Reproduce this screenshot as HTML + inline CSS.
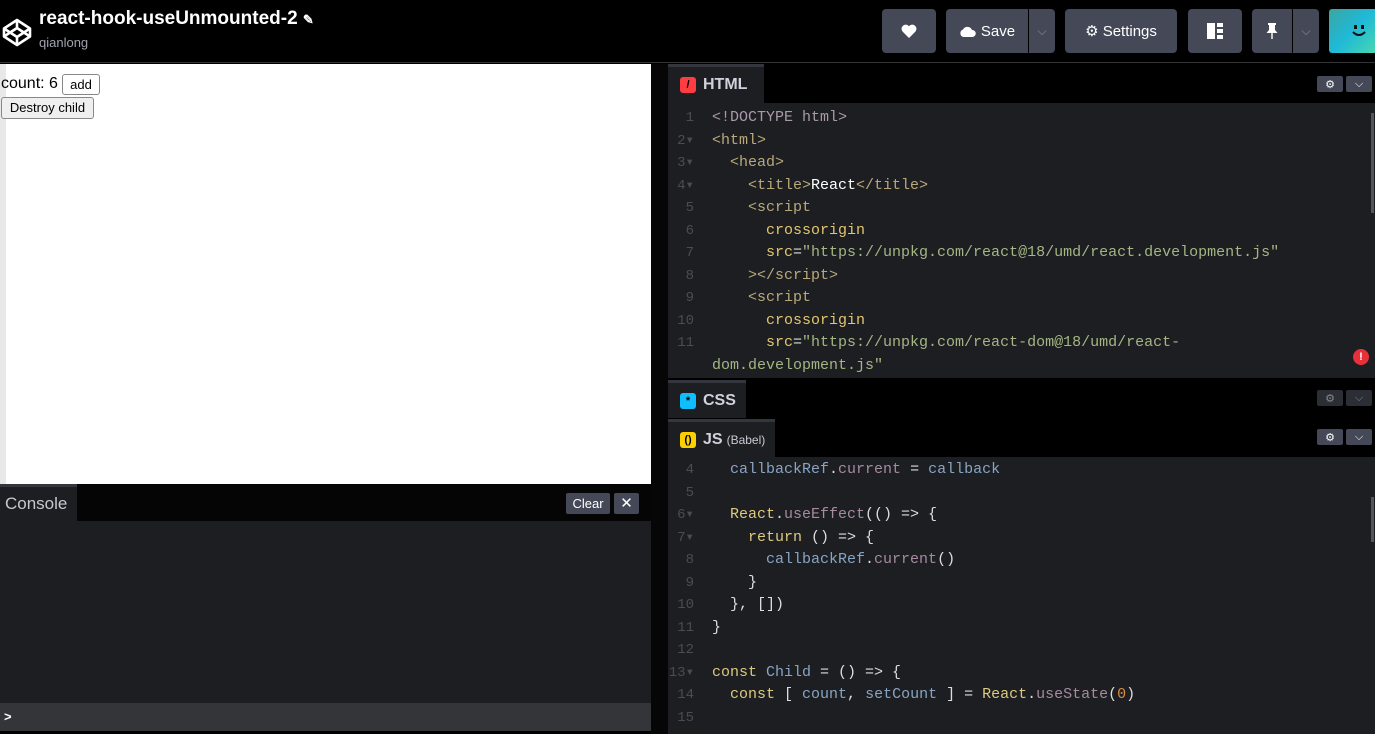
<!DOCTYPE html>
<html><head><meta charset="utf-8"><style>
*{box-sizing:border-box;margin:0;padding:0}
body{width:1375px;height:734px;overflow:hidden;background:#000;font-family:"Liberation Sans",sans-serif;position:relative}
.abs{position:absolute}
.btn{position:absolute;top:9px;height:44px;background:#444857;border-radius:4px;color:#fff;font-size:15px;display:flex;align-items:center;justify-content:center}
.code{font-family:"Liberation Mono",monospace;font-size:15px;line-height:22.5px;color:#ddd}
.code>div{position:relative;height:22.5px;white-space:pre}
.ln{position:absolute;left:0;top:0;width:40px;text-align:right;padding-right:14px;color:#4a4c52;font-size:14px}
.tab{position:absolute;background:#1d1e22;border-top:3px solid #34363e;color:#cfd2dc;font-weight:bold;font-size:16px;display:flex;align-items:center;padding-left:12px}
.ico{width:16px;height:16px;border-radius:3px;margin-right:7px;display:inline-flex;align-items:center;justify-content:center;font-size:11px}
.sm{position:absolute;width:26px;height:16px;background:#444857;border-radius:2px;color:#fff;font-size:11px;display:flex;align-items:center;justify-content:center}
.t{color:#b9a87a}.d{color:#a99aa9}.a{color:#e3c66e}.s{color:#a3b683}.y{color:#ddc97d}.p{color:#a58aa0}.b{color:#88a4c4}.o{color:#d98b42}
</style></head><body>
<div class="abs" style="left:0;top:0;width:1375px;height:63px;background:#000;border-bottom:1px solid #333"></div>
<svg class="abs" style="left:2px;top:17px" width="30" height="30" viewBox="0 0 30 30" fill="none" stroke="#fff" stroke-width="2.6" stroke-linejoin="round"><path d="M15 3L28 11.5V19.5L15 28L2 19.5V11.5Z"/><path d="M15 3V11M15 20V28M2 11.5L15 20L28 11.5M2 19.5L15 11L28 19.5"/></svg>
<div class="abs" style="left:39px;top:8px;color:#fff;font-size:19px;font-weight:bold">react-hook-useUnmounted-2 <span style="font-size:13px">✎</span></div>
<div class="abs" style="left:39px;top:35px;color:#a0a3ae;font-size:13px">qianlong</div>
<div class="btn" style="left:882px;width:54px"><svg width="16" height="14" viewBox="0 0 16 14"><path d="M8 14L1.5 7.5A4 4 0 0 1 8 2.2A4 4 0 0 1 14.5 7.5Z" fill="#fff"/></svg></div>
<div class="btn" style="left:946px;width:82px;border-radius:4px 0 0 4px"><svg width="17" height="11" viewBox="0 0 17 11" style="margin-right:5px"><path d="M4 11A4 4 0 0 1 4 3.5A5 5 0 0 1 13 4A3.5 3.5 0 0 1 13.5 11Z" fill="#fff"/></svg>Save</div>
<div class="btn" style="left:1029px;width:26px;border-radius:0 4px 4px 0;color:#8b8f9c;font-size:12px">⌵</div>
<div class="btn" style="left:1065px;width:112px">⚙&nbsp;Settings</div>
<div class="btn" style="left:1188px;width:54px"><svg width="16" height="16"><rect x="0" y="0" width="8" height="16" fill="#fff"/><rect x="10" y="0" width="6" height="4" fill="#fff"/><rect x="10" y="6" width="6" height="4" fill="#fff"/><rect x="10" y="12" width="6" height="4" fill="#fff"/></svg></div>
<div class="btn" style="left:1252px;width:40px;border-radius:4px 0 0 4px"><svg width="12" height="16" viewBox="0 0 12 16"><path d="M2 0H10V2H9V7L11.5 10H0.5L3 7V2H2Z" fill="#fff"/><rect x="5.3" y="10" width="1.4" height="6" fill="#fff"/></svg></div>
<div class="btn" style="left:1293px;width:26px;border-radius:0 4px 4px 0;color:#8b8f9c;font-size:12px">⌵</div>
<div class="abs" style="left:1329px;top:9px;width:46px;height:44px;background:linear-gradient(135deg,#3aa6a0,#1fb9d8 50%,#48d6b0);border-radius:3px 0 0 3px">
<svg class="abs" style="left:22px;top:15px" width="16" height="14" viewBox="0 0 16 14"><rect x="3" y="1" width="3" height="4" fill="#111"/><rect x="10" y="1" width="3" height="4" fill="#111"/><path d="M2 8Q8 14 14 8" stroke="#111" stroke-width="2" fill="none"/></svg></div>
<div class="abs" style="left:0;top:64px;width:651px;height:420px;background:#fff"></div>
<div class="abs" style="left:0;top:64px;width:6px;height:420px;background:#e8e8e8"></div>
<div class="abs" style="left:1px;top:75px;font-size:16px;color:#000">count: 6</div>
<div class="abs" style="left:62px;top:74px;width:38px;height:21px;border:1px solid #888;border-radius:3px;background:#fff;font-size:13px;text-align:center;line-height:19px">add</div>
<div class="abs" style="left:1px;top:97px;width:93px;height:22px;border:1px solid #888;border-radius:3px;background:#efefef;font-size:13px;text-align:center;line-height:20px">Destroy child</div>
<div class="abs" style="left:0;top:484px;width:651px;height:37px;background:#050505"></div>
<div class="tab" style="left:0;top:484px;width:77px;height:37px;padding-left:5px;font-weight:normal;font-size:17px;color:#c6c8d0">Console</div>
<div class="abs" style="left:566px;top:493px;width:44px;height:21px;background:#444857;border-radius:2px;color:#fff;font-size:13px;text-align:center;line-height:21px">Clear</div>
<div class="abs" style="left:614px;top:493px;width:25px;height:21px;background:#444857;border-radius:2px;color:#fff;font-size:15px;text-align:center;line-height:21px">✕</div>
<div class="abs" style="left:0;top:521px;width:651px;height:182px;background:#1d1e22"></div>
<div class="abs" style="left:0;top:703px;width:651px;height:28px;background:#343539;color:#fff;font-size:13px;font-weight:bold;padding:6px 4px">&gt;</div>
<div class="abs" style="left:651px;top:64px;width:17px;height:670px;background:#060606"></div>
<div class="abs" style="left:668px;top:64px;width:707px;height:670px;background:#000"></div>
<div class="tab" style="left:668px;top:64px;width:96px;height:39px"><span class="ico" style="background:#ff3c41;color:#000">/</span>HTML</div>
<div class="sm" style="left:1317px;top:76px">⚙</div><div class="sm" style="left:1346px;top:76px">⌵</div>
<div class="abs" style="left:668px;top:103px;width:707px;height:275px;background:#1d1e22;overflow:hidden">
<div class="code abs" style="left:0;top:4px;width:700px">
<div><span class="ln">1</span><span style="padding-left:44px" class="d">&lt;!DOCTYPE html&gt;</span></div>
<div><span class="ln">2▾</span><span style="padding-left:44px" class="t">&lt;html&gt;</span></div>
<div><span class="ln">3▾</span><span style="padding-left:44px" class="t">  &lt;head&gt;</span></div>
<div><span class="ln">4▾</span><span style="padding-left:44px" class="t">    &lt;title&gt;<span style="color:#fff">React</span>&lt;/title&gt;</span></div>
<div><span class="ln">5</span><span style="padding-left:44px" class="t">    &lt;script</span></div>
<div><span class="ln">6</span><span style="padding-left:44px" class="a">      crossorigin</span></div>
<div><span class="ln">7</span><span style="padding-left:44px"><span class="a">      src</span>=<span class="s">"https://unpkg.com/react@18/umd/react.development.js"</span></span></div>
<div><span class="ln">8</span><span style="padding-left:44px" class="t">    &gt;&lt;/script&gt;</span></div>
<div><span class="ln">9</span><span style="padding-left:44px" class="t">    &lt;script</span></div>
<div><span class="ln">10</span><span style="padding-left:44px" class="a">      crossorigin</span></div>
<div><span class="ln">11</span><span style="padding-left:44px"><span class="a">      src</span>=<span class="s">"https://unpkg.com/react-dom@18/umd/react-</span></span></div>
<div><span style="padding-left:44px" class="s">dom.development.js"</span></div>
</div>
<div class="abs" style="left:703px;top:10px;width:3px;height:100px;background:#555"></div>
<div class="abs" style="left:685px;top:246px;width:16px;height:16px;border-radius:50%;background:#e8303a;color:#fff;font-size:11px;font-weight:bold;text-align:center;line-height:16px">!</div>
</div>
<div class="tab" style="left:668px;top:380px;width:78px;height:38px"><span class="ico" style="background:#0ebeff;color:#000">*</span>CSS</div>
<div class="sm" style="left:1317px;top:390px;background:#2c2e35;color:#888">⚙</div><div class="sm" style="left:1346px;top:390px;background:#2c2e35;color:#888">⌵</div>
<div class="tab" style="left:668px;top:419px;width:107px;height:38px"><span class="ico" style="background:#fcd000;color:#000;font-weight:bold">()</span>JS<span style="font-weight:normal;font-size:12px;margin-left:4px;color:#c8cad2">(Babel)</span></div>
<div class="sm" style="left:1317px;top:429px">⚙</div><div class="sm" style="left:1346px;top:429px">⌵</div>
<div class="abs" style="left:668px;top:457px;width:707px;height:277px;background:#1d1e22;overflow:hidden">
<div class="code abs" style="left:0;top:2px;width:700px">
<div><span class="ln">4</span><span style="padding-left:44px"><span class="b">  callbackRef</span>.<span class="p">current</span> = <span class="b">callback</span></span></div>
<div><span class="ln">5</span></div>
<div><span class="ln">6▾</span><span style="padding-left:44px"><span class="y">  React</span>.<span class="p">useEffect</span>(() =&gt; {</span></div>
<div><span class="ln">7▾</span><span style="padding-left:44px"><span class="y">    return</span> () =&gt; {</span></div>
<div><span class="ln">8</span><span style="padding-left:44px"><span class="b">      callbackRef</span>.<span class="p">current</span>()</span></div>
<div><span class="ln">9</span><span style="padding-left:44px">    }</span></div>
<div><span class="ln">10</span><span style="padding-left:44px">  }, [])</span></div>
<div><span class="ln">11</span><span style="padding-left:44px">}</span></div>
<div><span class="ln">12</span></div>
<div><span class="ln">13▾</span><span style="padding-left:44px"><span class="y">const</span> <span class="b">Child</span> = () =&gt; {</span></div>
<div><span class="ln">14</span><span style="padding-left:44px"><span class="y">  const</span> [ <span class="b">count</span>, <span class="b">setCount</span> ] = <span class="y">React</span>.<span class="p">useState</span>(<span class="o">0</span>)</span></div>
<div><span class="ln">15</span></div>
</div>
<div class="abs" style="left:703px;top:40px;width:3px;height:45px;background:#555"></div>
</div>
</body></html>
